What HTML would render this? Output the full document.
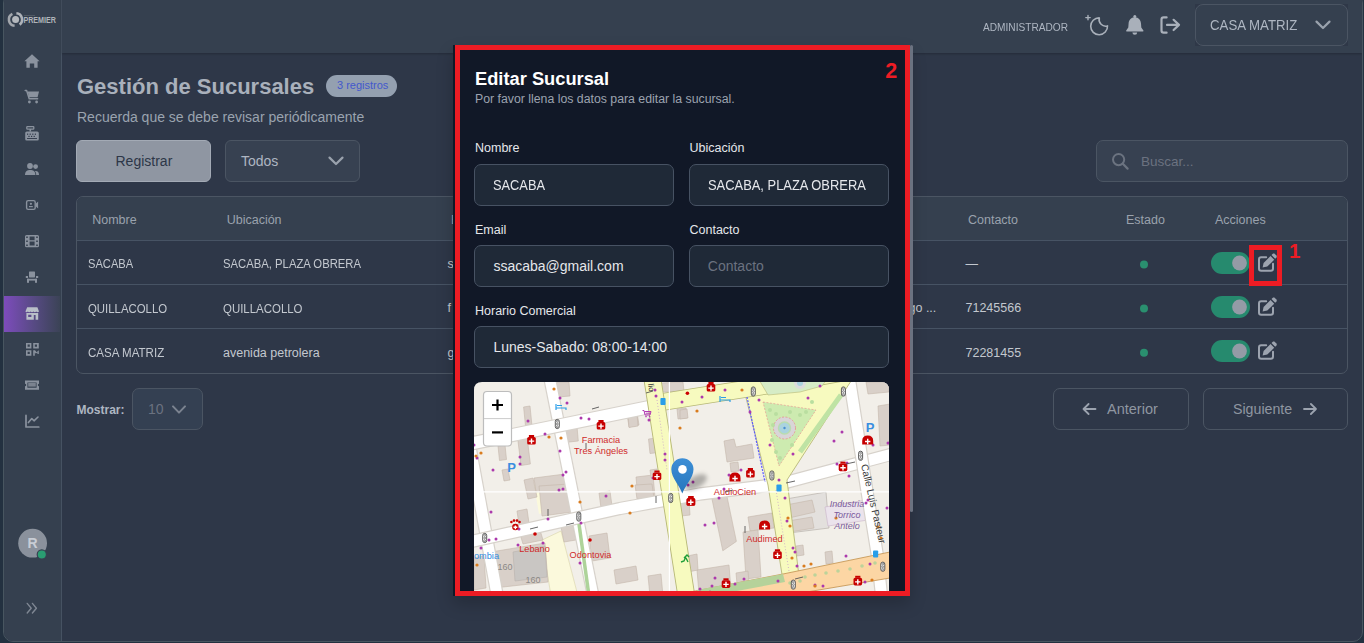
<!DOCTYPE html>
<html><head><meta charset="utf-8">
<style>
*{box-sizing:border-box;margin:0;padding:0}
html,body{width:1364px;height:643px;overflow:hidden;background:#233140;font-family:"Liberation Sans",sans-serif}
.a{position:absolute}
.t{position:absolute;line-height:1;white-space:nowrap}
#app{position:absolute;left:3px;top:-7px;width:1360px;height:649px;border:1px solid #485660;border-radius:10px;background:#2e3748;overflow:hidden}
#side{position:absolute;left:0;top:0;width:58px;height:100%;background:#35404f;border-right:1px solid #465262}
#hdr{position:absolute;left:58px;top:0;right:0;height:59px;background:#35404f;box-shadow:0 1px 2px rgba(0,0,0,.22)}
.ico{position:absolute;left:19px;width:20px;height:20px}
</style></head><body>
<div id="app">
  <div id="side"></div>
  <div id="hdr"></div>
</div>


<!-- sidebar svg -->
<svg class="a" style="left:0;top:0" width="62" height="643" viewBox="0 0 62 643">
  <defs><linearGradient id="act" x1="0" x2="1"><stop offset="0" stop-color="#7d4cbc"/><stop offset="0.55" stop-color="#564a82"/><stop offset="1" stop-color="#3b4356"/></linearGradient></defs>
  <rect x="4" y="296" width="56" height="36" fill="url(#act)"/>
  <!-- logo -->
  <path d="M16.4 13.3 A6.3 6.3 0 0 1 19.6 24.6" fill="none" stroke="#aeb2b8" stroke-width="2.6"/>
  <path d="M14.6 25.8 A6.3 6.3 0 0 1 12.4 13.9" fill="none" stroke="#a2a6ac" stroke-width="2.6"/>
  <circle cx="15.6" cy="19.6" r="3.5" fill="#b4b8bd"/>
  <text x="23.4" y="23.1" font-family="Liberation Sans" font-weight="bold" font-size="8.6" fill="#afb3b9" textLength="32.6" lengthAdjust="spacingAndGlyphs">PREMIER</text>
  <rect x="24" y="15" width="11" height="0.6" fill="#656b74"/>
  <g fill="#8a929e" stroke="none">
    <!-- home -->
    <path d="M32 54.2 L39.6 61.2 H37.6 V67.8 H34.2 V63.4 H29.8 V67.8 H26.4 V61.2 H24.4 Z"/>
    <!-- cart -->
    <path d="M27.6 91.6 H39 L37.6 97.2 H29.2 Z"/>
    <circle cx="29.4" cy="102" r="1.4"/><circle cx="36.6" cy="102" r="1.4"/>
    <!-- register -->
    <path d="M25.2 133 a1.6 1.6 0 0 1 1.6 -1.6 H37.2 a1.6 1.6 0 0 1 1.6 1.6 V139 a1.5 1.5 0 0 1 -1.5 1.5 H26.7 a1.5 1.5 0 0 1 -1.5 -1.5 Z"/>
    <rect x="29.5" y="129" width="1.6" height="2.6"/>
    <!-- people -->
    <circle cx="30" cy="166" r="2.9"/><circle cx="35.6" cy="166.6" r="2.4"/>
    <path d="M25 175 C25 171.2 27.4 170 30.2 170 C33 170 35.4 171.2 35.4 175 Z"/>
    <path d="M36.2 175 C36.2 173 35.6 171.6 34.6 171 C37.6 170.6 39 172 39 175 Z"/>
    <!-- film -->
    <path fill-rule="evenodd" d="M26.5 235.1 H37.5 a1.5 1.5 0 0 1 1.5 1.5 V245.8 a1.5 1.5 0 0 1 -1.5 1.5 H26.5 a1.5 1.5 0 0 1 -1.5 -1.5 V236.6 a1.5 1.5 0 0 1 1.5 -1.5 Z M26.2 236.4 v1.6 h1.6 v-1.6 Z M26.2 240.4 v1.6 h1.6 v-1.6 Z M26.2 244.4 v1.6 h1.6 v-1.6 Z M36.2 236.4 v1.6 h1.6 v-1.6 Z M36.2 240.4 v1.6 h1.6 v-1.6 Z M36.2 244.4 v1.6 h1.6 v-1.6 Z M29.6 236.6 h5 v3.6 h-5 Z M29.6 241.6 h5 v4 h-5 Z"/>
    <!-- chair -->
    <rect x="29" y="271.6" width="6" height="5.8" rx="0.6"/>
    <rect x="25.8" y="276" width="2.2" height="2"/><rect x="36" y="276" width="2.2" height="2"/>
    <rect x="27" y="278.8" width="10" height="1.8"/>
    <rect x="27" y="278.8" width="2" height="4"/><rect x="35" y="278.8" width="2" height="4"/>
    <!-- qr -->
    <path fill-rule="evenodd" d="M26 343 h5.4 v5.4 h-5.4 Z M27.6 344.6 v2.2 h2.2 v-2.2 Z M33.2 343 h5.6 v5.4 h-5.6 Z M34.8 344.6 v2.2 h2.2 v-2.2 Z M26 350.2 h5.4 v5.6 h-5.4 Z M27.6 351.8 v2.2 h2.2 v-2.2 Z"/>
    <path d="M33.2 350.2 h1.8 l1.6 2 l2.2 -2 v3.8 h-1.4 v-1.4 l-1.6 1 l-1 -1 v3.2 h-1.6 Z"/>
    <!-- ticket -->
    <path fill-rule="evenodd" d="M25 380.4 H39 V383.8 a1.2 1.2 0 0 0 0 2.4 V389.8 H25 V386.2 a1.2 1.2 0 0 0 0 -2.4 Z M27.4 382.4 V387.8 H36.6 V382.4 Z"/>
    <rect x="28.2" y="383" width="7.6" height="3.6" fill="#7b838f"/>
  </g>
  <g fill="none" stroke="#8a929e" stroke-width="1.5" stroke-linecap="round" stroke-linejoin="round">
    <path d="M25.2 90.4 H26.6 L29.2 98.8 H37.6"/>
    <rect x="26.8" y="126.6" width="7" height="2.6" rx="0.6" stroke-width="1.3"/>
    <rect x="26.6" y="200.6" width="8.6" height="8.8" rx="1.6" stroke-width="1.4"/>
    <path d="M26 415.4 V427 H38.8" stroke-width="1.7"/>
    <path d="M28.4 422.6 L31.8 418.6 L34 420.8 L38 417" stroke-width="1.6"/>
    <path d="M27.2 603.4 L31.2 608.2 L27.2 613 M32.4 603.4 L36.4 608.2 L32.4 613" stroke="#7f8793" stroke-width="1.4"/>
  </g>
  <g fill="#2e3748">
    <rect x="27" y="133.6" width="1.2" height="1.2"/><rect x="29.6" y="133.6" width="1.2" height="1.2"/><rect x="32.2" y="133.6" width="1.2" height="1.2"/><rect x="34.8" y="133.6" width="1.2" height="1.2"/>
    <rect x="28.4" y="135.8" width="1.2" height="1.2"/><rect x="31" y="135.8" width="1.2" height="1.2"/><rect x="33.6" y="135.8" width="1.2" height="1.2"/>
    <rect x="27" y="138" width="10" height="0.9"/>
  </g>
  <g fill="#8a929e">
    <circle cx="30.9" cy="203.8" r="1.1"/><rect x="29" y="206" width="3.8" height="1.2"/>
    <path d="M35.6 203.8 L38.1 201.6 V208.4 L35.6 206.2 Z"/>
  </g>
  <!-- store -->
  <g fill="#b9bfc8">
    <path d="M27.2 307.2 H37.4 L39 311.6 Q37.6 312.8 36.2 311.6 Q34.8 312.8 33.4 311.6 Q32 312.8 30.6 311.6 Q29.2 312.8 27.8 311.6 Q26.6 312.8 25.4 311.6 Z"/>
    <path fill-rule="evenodd" d="M26.4 313 H38.2 V319.8 H26.4 Z M28.2 314.8 v2.2 h3.2 v-2.2 Z M33.8 315 v4.8 h1.8 v-4.8 Z"/>
  </g>
  <!-- avatar -->
  <circle cx="32.6" cy="543.2" r="14.4" fill="#8a919c"/>
  <text x="32.6" y="548.4" text-anchor="middle" font-family="Liberation Sans" font-weight="bold" font-size="14" fill="#c8cdd5">R</text>
  <circle cx="41.8" cy="554.4" r="4.6" fill="#2a9d72" stroke="#374151" stroke-width="1.2"/>
</svg>

<!-- header -->
<div class="t" style="left:983px;top:21.5px;font-size:11px;color:#aeb6c2;transform:scaleX(0.921);transform-origin:0 0">ADMINISTRADOR</div>
<div class="a" style="left:1195px;top:4px;width:153px;height:42px;background:#2f3848"></div><div class="a" style="left:1195px;top:4px;width:153px;height:42px;border:1px solid #4b5563;border-radius:8px;background:#35404f"></div>
<div class="t" style="left:1210px;top:18px;font-size:14px;color:#aeb6c2;transform:scaleX(0.946);transform-origin:0 0">CASA MATRIZ</div>

<!-- title -->
<div class="t" style="left:77px;top:76.4px;font-size:22px;font-weight:bold;color:#a9b0bb">Gestión de Sucursales</div>
<div class="a" style="left:326px;top:75px;width:71px;height:22px;border-radius:11px;background:#94a0b0"></div>
<div class="t" style="left:337px;top:80.4px;font-size:11px;color:#4358cc">3 registros</div>
<div class="t" style="left:77px;top:109.5px;font-size:14px;color:#9aa3af">Recuerda que se debe revisar periódicamente</div>

<!-- buttons -->
<div class="a" style="left:76px;top:140px;width:135px;height:42px;border:1px solid #a3aab5;border-radius:6px;background:#8f96a2"></div>
<div class="t" style="left:115.5px;top:154px;font-size:14px;color:#2d3748">Registrar</div>
<div class="a" style="left:225px;top:140px;width:135px;height:42px;border:1px solid #4b5563;border-radius:6px;background:#374151"></div>
<div class="t" style="left:241px;top:154px;font-size:14px;color:#aeb6c2">Todos</div>

<div class="a" style="left:1096px;top:140px;width:252px;height:42px;border:1px solid #4b5563;border-radius:7px;background:#374151"></div>
<div class="t" style="left:1141px;top:154.5px;font-size:13.5px;color:#6b7280">Buscar...</div>

<!-- table -->
<div class="a" style="left:76px;top:196px;width:1272px;height:178px;border:1px solid #4b5563;border-radius:7px;background:#2e3748;overflow:hidden">
  <div class="a" style="left:0;top:0;width:100%;height:44px;background:#35404f;border-bottom:1px solid #475364"></div>
  <div class="a" style="left:0;top:87px;width:100%;height:1px;background:#475364"></div>
  <div class="a" style="left:0;top:131px;width:100%;height:1px;background:#475364"></div>
</div>

<!-- pagination -->
<div class="t" style="left:76.5px;top:403.8px;font-size:12px;font-weight:bold;color:#aeb6c2">Mostrar:</div>
<div class="a" style="left:132px;top:388px;width:71px;height:42px;border:1px solid #4b5563;border-radius:7px;background:#344052"></div>
<div class="t" style="left:148px;top:402px;font-size:14px;color:#6b7280">10</div>
<div class="a" style="left:1053px;top:388px;width:136px;height:42px;border:1px solid #4b5563;border-radius:7px"></div>
<div class="t" style="left:1107px;top:402px;font-size:14.5px;color:#8f96a1">Anterior</div>
<div class="a" style="left:1203px;top:388px;width:145px;height:42px;border:1px solid #4b5563;border-radius:7px"></div>
<div class="t" style="left:1233px;top:402px;font-size:14.2px;color:#8f96a1">Siguiente</div>


<!-- header/main icons svg -->
<svg class="a" style="left:0;top:0" width="1364" height="643" viewBox="0 0 1364 643">
  <g fill="none" stroke="#a9b0ba" stroke-linecap="round" stroke-linejoin="round">
    <path d="M1099.3 17.9 A8.4 8.4 0 1 0 1107.5 25.9 A6.6 6.6 0 0 1 1099.3 17.9 Z" stroke-width="1.6"/>
    <path d="M1088 15.4 V19.8 M1085.8 17.6 H1090.2" stroke-width="1.4"/>
    <path d="M1166.6 17.4 H1163.6 a2.1 2.1 0 0 0 -2.1 2.1 V30.6 a2.1 2.1 0 0 0 2.1 2.1 H1166.6" stroke-width="2.2"/>
    <path d="M1167 24.9 H1179 M1173.6 19.8 L1179 24.9 L1173.6 30" stroke-width="2.2"/>
    <path d="M1316.5 21.6 L1323 28 L1329.5 21.6" stroke-width="2.2" stroke="#9aa2ad"/>
    <path d="M329.5 157.6 L336 164 L342.5 157.6" stroke-width="2.2" stroke="#9aa2ad"/>
    <path d="M173 406.4 L179 412.6 L185 406.4" stroke-width="2" stroke="#7b8390"/>
    <circle cx="1118.6" cy="159.6" r="5.6" stroke="#6b7380" stroke-width="2"/>
    <path d="M1122.8 163.8 L1127.6 168.6" stroke="#6b7380" stroke-width="2.2"/>
    <path d="M1095.5 409 H1083.5 M1088.6 404 L1083.5 409 L1088.6 414" stroke="#9ca3af" stroke-width="1.8"/>
    <path d="M1304 409 H1316 M1310.9 404 L1316 409 L1310.9 414" stroke="#9ca3af" stroke-width="1.8"/>
  </g>
  <g fill="#a9b0ba">
    <circle cx="1134.8" cy="16.4" r="1.5"/>
    <path d="M1134.8 17.2 C1130.8 17.2 1128.7 20.2 1128.6 23.6 L1128.3 27.6 L1126.2 30.4 Q1125.7 31.4 1126.9 31.4 H1142.7 Q1143.9 31.4 1143.4 30.4 L1141.3 27.6 L1141 23.6 C1140.9 20.2 1138.8 17.2 1134.8 17.2 Z"/>
    <path d="M1132.4 32.4 H1137.2 a2.4 2.4 0 0 1 -4.8 0 Z"/>
  </g>
  <!-- status dots -->
  <g fill="#2a8f6f">
    <circle cx="1144" cy="264.5" r="4"/><circle cx="1144" cy="308.6" r="4"/><circle cx="1144" cy="352.8" r="4"/>
  </g>
  <!-- toggles -->
  <g>
    <rect x="1211" y="252" width="39" height="22" rx="11" fill="#268a6e"/>
    <circle cx="1239.5" cy="263" r="7.4" fill="#949ba6"/>
    <rect x="1211" y="296" width="39" height="22" rx="11" fill="#268a6e"/>
    <circle cx="1239.5" cy="307" r="7.4" fill="#949ba6"/>
    <rect x="1211" y="340" width="39" height="22" rx="11" fill="#268a6e"/>
    <circle cx="1239.5" cy="351" r="7.4" fill="#949ba6"/>
  </g>
  <!-- edit icons -->
  <g id="ed0">
    <path d="M1266.2 257.2 H1261.2 a2.2 2.2 0 0 0 -2.2 2.2 V268.6 a2.2 2.2 0 0 0 2.2 2.2 H1270.8 a2.2 2.2 0 0 0 2.2 -2.2 V263.8" fill="none" stroke="#9ca3af" stroke-width="2" stroke-linecap="round"/>
    <path d="M1262.60 267.60 L1263.59 262.93 L1270.52 256.00 L1274.20 259.68 L1267.27 266.61 Z M1271.51 255.01 L1273.07 253.46 L1274.34 253.46 L1276.74 255.86 L1276.74 257.13 L1275.19 258.69 Z" fill="#9ca3af"/>
  </g>
  <g transform="translate(0 44)">
    <path d="M1266.2 257.2 H1261.2 a2.2 2.2 0 0 0 -2.2 2.2 V268.6 a2.2 2.2 0 0 0 2.2 2.2 H1270.8 a2.2 2.2 0 0 0 2.2 -2.2 V263.8" fill="none" stroke="#9ca3af" stroke-width="2" stroke-linecap="round"/>
    <path d="M1262.60 267.60 L1263.59 262.93 L1270.52 256.00 L1274.20 259.68 L1267.27 266.61 Z M1271.51 255.01 L1273.07 253.46 L1274.34 253.46 L1276.74 255.86 L1276.74 257.13 L1275.19 258.69 Z" fill="#9ca3af"/>
  </g>
  <g transform="translate(0 88)">
    <path d="M1266.2 257.2 H1261.2 a2.2 2.2 0 0 0 -2.2 2.2 V268.6 a2.2 2.2 0 0 0 2.2 2.2 H1270.8 a2.2 2.2 0 0 0 2.2 -2.2 V263.8" fill="none" stroke="#9ca3af" stroke-width="2" stroke-linecap="round"/>
    <path d="M1262.60 267.60 L1263.59 262.93 L1270.52 256.00 L1274.20 259.68 L1267.27 266.61 Z M1271.51 255.01 L1273.07 253.46 L1274.34 253.46 L1276.74 255.86 L1276.74 257.13 L1275.19 258.69 Z" fill="#9ca3af"/>
  </g>
</svg>

<!-- table text -->
<div class="t" style="left:92.2px;top:214.0px;font-size:12.5px;color:#9aa2ad;">Nombre</div>
<div class="t" style="left:226.7px;top:214.0px;font-size:12.5px;color:#9aa2ad;">Ubicación</div>
<div class="t" style="left:451px;top:214.0px;font-size:12.5px;color:#9aa2ad;">Email</div>
<div class="t" style="left:968px;top:214.0px;font-size:12.5px;color:#9aa2ad;">Contacto</div>
<div class="t" style="left:1126px;top:214.0px;font-size:12.5px;color:#9aa2ad;">Estado</div>
<div class="t" style="left:1215px;top:214.0px;font-size:12.5px;color:#9aa2ad;">Acciones</div>
<div class="t" style="left:88.3px;top:257.4px;font-size:13.2px;color:#c3c8cf;transform:scaleX(0.844);transform-origin:0 0">SACABA</div>
<div class="t" style="left:223px;top:257.4px;font-size:13.2px;color:#c3c8cf;transform:scaleX(0.856);transform-origin:0 0">SACABA, PLAZA OBRERA</div>
<div class="t" style="left:447.5px;top:258.0px;font-size:12.5px;color:#c3c8cf;">s</div>
<div class="t" style="left:965.5px;top:258.0px;font-size:12.5px;color:#c3c8cf;">—</div>
<div class="t" style="left:88.3px;top:301.8px;font-size:13.2px;color:#c3c8cf;transform:scaleX(0.864);transform-origin:0 0">QUILLACOLLO</div>
<div class="t" style="left:223px;top:301.8px;font-size:13.2px;color:#c3c8cf;transform:scaleX(0.868);transform-origin:0 0">QUILLACOLLO</div>
<div class="t" style="left:447.5px;top:302.4px;font-size:12.5px;color:#c3c8cf;">f</div>
<div class="t" style="left:965.5px;top:302.4px;font-size:12.5px;color:#c3c8cf;">71245566</div>
<div class="t" style="left:88.3px;top:346.2px;font-size:13.2px;color:#c3c8cf;transform:scaleX(0.877);transform-origin:0 0">CASA MATRIZ</div>
<div class="t" style="left:223px;top:346.8px;font-size:12.5px;color:#c3c8cf;">avenida petrolera</div>
<div class="t" style="left:447.5px;top:346.8px;font-size:12.5px;color:#c3c8cf;text-decoration:underline">g</div>
<div class="t" style="left:965.5px;top:346.8px;font-size:12.5px;color:#c3c8cf;">72281455</div>
<div class="t" style="left:908.5px;top:302.4px;font-size:12.5px;color:#c3c8cf;">go ...</div>

<!-- modal -->
<div class="a" style="left:453px;top:45px;width:457px;height:551px;background:#111827;box-shadow:0 8px 16px rgba(0,0,0,.2)"></div>
<div class="t" style="left:475px;top:70.3px;font-size:18.3px;color:#ffffff;font-weight:bold">Editar Sucursal</div>
<div class="t" style="left:475px;top:93.3px;font-size:12.3px;color:#9ca3af;">Por favor llena los datos para editar la sucursal.</div>
<div class="t" style="left:475px;top:142.4px;font-size:12.5px;color:#e5e7eb;">Nombre</div>
<div class="t" style="left:689.5px;top:142.4px;font-size:12.5px;color:#e5e7eb;">Ubicación</div>
<div class="t" style="left:475px;top:223.5px;font-size:12.5px;color:#e5e7eb;">Email</div>
<div class="t" style="left:689.5px;top:223.5px;font-size:12.5px;color:#e5e7eb;">Contacto</div>
<div class="t" style="left:475px;top:304.5px;font-size:12.5px;color:#e5e7eb;">Horario Comercial</div>
<div class="a" style="left:474px;top:164px;width:200px;height:42px;background:#1f2937;border:1px solid #475263;border-radius:7px"></div>
<div class="a" style="left:689px;top:164px;width:200px;height:42px;background:#1f2937;border:1px solid #475263;border-radius:7px"></div>
<div class="a" style="left:474px;top:245px;width:200px;height:42px;background:#1f2937;border:1px solid #475263;border-radius:7px"></div>
<div class="a" style="left:689px;top:245px;width:200px;height:42px;background:#1f2937;border:1px solid #475263;border-radius:7px"></div>
<div class="a" style="left:474px;top:326px;width:415px;height:42px;background:#1f2937;border:1px solid #475263;border-radius:7px"></div>
<div class="t" style="left:493.4px;top:177.9px;font-size:14px;color:#e5e7eb;transform:scaleX(0.916);transform-origin:0 0">SACABA</div>
<div class="t" style="left:707.8px;top:177.9px;font-size:14px;color:#e5e7eb;transform:scaleX(0.922);transform-origin:0 0">SACABA, PLAZA OBRERA</div>
<div class="t" style="left:493.4px;top:258.6px;font-size:14px;color:#e5e7eb;">ssacaba@gmail.com</div>
<div class="t" style="left:707.8px;top:258.6px;font-size:14px;color:#6b7280;">Contacto</div>
<div class="t" style="left:493.4px;top:339.5px;font-size:14px;color:#e5e7eb;">Lunes-Sabado: 08:00-14:00</div>
<!-- map -->
<svg class="a" style="left:474px;top:382px" width="415" height="214" viewBox="474 382 415 214">
<defs><clipPath id="mc"><path d="M482 382 H881 Q889 382 889 390 V596 H474 V390 Q474 382 482 382 Z"/></clipPath><radialGradient id="shd" cx="0.5" cy="0.5" r="0.5"><stop offset="0" stop-color="#000" stop-opacity="0.35"/><stop offset="1" stop-color="#000" stop-opacity="0"/></radialGradient><filter id="blr" x="-50%" y="-50%" width="200%" height="200%"><feGaussianBlur stdDeviation="2.2"/></filter><linearGradient id="pin" x1="0" y1="0" x2="0" y2="1"><stop offset="0" stop-color="#3d8fd6"/><stop offset="1" stop-color="#2676bd"/></linearGradient></defs>
<g clip-path="url(#mc)">
<rect x="474" y="382" width="415" height="214" fill="#f2efe9"/>
<polygon points="542,540 561,531 578,596 551,596" fill="#fbf9dc" stroke="#d8d4a8" stroke-width="0.6" />
<polygon points="534,485 541,484 546,512 539,514" fill="#fbf9dc" stroke="none" stroke-width="0" />
<polygon points="786,499 826,492 829,528 789,533" fill="#e3e0dd" stroke="#b0a9a3" stroke-width="0.6" />
<polygon points="627,414 637,412 639,425 629,427" fill="#d9d0c9" stroke="#c4b7ab" stroke-width="0.6" />
<polygon points="677,409 686,408 687,418 678,419" fill="#d9d0c9" stroke="#c4b7ab" stroke-width="0.6" />
<polygon points="661,383 683,382 684,391 662,392" fill="#d9d0c9" stroke="#c4b7ab" stroke-width="0.6" />
<polygon points="724,441 734,439 736,447 752,444 754,458 727,462" fill="#d9d0c9" stroke="#c4b7ab" stroke-width="0.6" />
<polygon points="730,463 738,462 739,471 731,472" fill="#d9d0c9" stroke="#c4b7ab" stroke-width="0.6" />
<polygon points="636,477 653,475 655,497 638,499" fill="#d9d0c9" stroke="#c4b7ab" stroke-width="0.6" />
<polygon points="650,470 657,469 658,477 651,478" fill="#d9d0c9" stroke="#c4b7ab" stroke-width="0.6" />
<polygon points="680,500 689,499 690,515 681,516" fill="#d9d0c9" stroke="#c4b7ab" stroke-width="0.6" />
<polygon points="711,494.4 726,491.8 736.4,541.4 722.8,550.8" fill="#d9d0c9" stroke="#c4b7ab" stroke-width="0.6" />
<polygon points="523.6,407 530,406 532,426 525.6,427" fill="#d9d0c9" stroke="#c4b7ab" stroke-width="0.6" />
<polygon points="517.6,438 527,436.5 530.4,464 521,465.5" fill="#d9d0c9" stroke="#c4b7ab" stroke-width="0.6" />
<polygon points="498,446 505,445 506.5,459.5 499.5,460.5" fill="#d9d0c9" stroke="#c4b7ab" stroke-width="0.6" />
<polygon points="564.7,428 577,426.5 578.3,441 566,442.4" fill="#d9d0c9" stroke="#c4b7ab" stroke-width="0.6" />
<polygon points="628,415 637,413.5 638,426 629,427.5" fill="#d9d0c9" stroke="#c4b7ab" stroke-width="0.6" />
<polygon points="556,382 569,382 570,396 558,397" fill="#d9d0c9" stroke="#c4b7ab" stroke-width="0.6" />
<polygon points="648.5,439 657,438 658.7,452.5 650,453.5" fill="#d9d0c9" stroke="#c4b7ab" stroke-width="0.6" />
<polygon points="534,478 565,474 566,490 536,492" fill="#d9d0c9" stroke="#c4b7ab" stroke-width="0.6" />
<polygon points="539,486 569,484 572,512 542,516" fill="#d9d0c9" stroke="#c4b7ab" stroke-width="0.6" />
<polygon points="517,511 527,509 529,523 519,525" fill="#d9d0c9" stroke="#c4b7ab" stroke-width="0.6" />
<polygon points="520,534 540,530 543,540 523,544" fill="#d9d0c9" stroke="#c4b7ab" stroke-width="0.6" />
<polygon points="561,527 573,525 576,540 564,542" fill="#d9d0c9" stroke="#c4b7ab" stroke-width="0.6" />
<polygon points="491,552 545,543 548,582 494,588" fill="#d9d0c9" stroke="#c4b7ab" stroke-width="0.6" />
<polygon points="589,536 607,533 610,558 592,561" fill="#d9d0c9" stroke="#c4b7ab" stroke-width="0.6" />
<polygon points="599,493 610,491 612,506 601,508" fill="#d9d0c9" stroke="#c4b7ab" stroke-width="0.6" />
<polygon points="635,485 652,484 654,498 637,499" fill="#d9d0c9" stroke="#c4b7ab" stroke-width="0.6" />
<polygon points="614,570 636,566 638,580 616,584" fill="#d9d0c9" stroke="#c4b7ab" stroke-width="0.6" />
<polygon points="648,576 661,574 663,596 650,596" fill="#d9d0c9" stroke="#c4b7ab" stroke-width="0.6" />
<polygon points="474,558 484,556 486,588 474,590" fill="#d9d0c9" stroke="#c4b7ab" stroke-width="0.6" />
<polygon points="748,517 772,513 774,528 750,531" fill="#d9d0c9" stroke="#c4b7ab" stroke-width="0.6" />
<polygon points="743,532 758,530 761,577 746,579" fill="#d9d0c9" stroke="#c4b7ab" stroke-width="0.6" />
<polygon points="786,505 812,500 815,512 789,518" fill="#d9d0c9" stroke="#c4b7ab" stroke-width="0.6" />
<polygon points="788,521 812,517 814,528 790,532" fill="#d9d0c9" stroke="#c4b7ab" stroke-width="0.6" />
<polygon points="796,546 803,545 804,555 797,556" fill="#d9d0c9" stroke="#c4b7ab" stroke-width="0.6" />
<polygon points="825,552 832,551 833,563 826,564" fill="#d9d0c9" stroke="#c4b7ab" stroke-width="0.6" />
<polygon points="697,570 729,565 731,590 699,594" fill="#d9d0c9" stroke="#c4b7ab" stroke-width="0.6" />
<polygon points="736,573 748,571 749,582 737,584" fill="#d9d0c9" stroke="#c4b7ab" stroke-width="0.6" />
<polygon points="687,556 697,554 698,570 688,572" fill="#d9d0c9" stroke="#c4b7ab" stroke-width="0.6" />
<polygon points="878,406 890,404 890,445 880,446" fill="#d9d0c9" stroke="#c4b7ab" stroke-width="0.6" />
<polygon points="680,410 687,409 688,418 680,419" fill="#d9d0c9" stroke="#c4b7ab" stroke-width="0.6" />
<polygon points="474,470 480,469 482,486 474,487" fill="#d9d0c9" stroke="#c4b7ab" stroke-width="0.6" />
<polygon points="498,414 506,412 511,432 503,434" fill="#d9d0c9" stroke="#c4b7ab" stroke-width="0.6" />
<polygon points="524,480 533,478 537,497 528,499" fill="#d9d0c9" stroke="#c4b7ab" stroke-width="0.6" />
<polygon points="502,470 508,469 510,480 504,481" fill="#d9d0c9" stroke="#c4b7ab" stroke-width="0.6" />
<polygon points="780,383 800,382 802,392 782,393" fill="#d9d0c9" stroke="#c4b7ab" stroke-width="0.6" />
<polygon points="866,382 889,382 889,392 868,394" fill="#d9d0c9" stroke="#c4b7ab" stroke-width="0.6" />
<polygon points="513,552 545,546 547,577 515,581" fill="#c9c6c3" stroke="#b8b2ac" stroke-width="0.6" />
<polygon points="825,507 866,500 868,520 828,526" fill="#ebe3ec" stroke="#c9b3c9" stroke-width="0.6" />
<polygon points="742,382 790,382 760,392" fill="#cdebb0" stroke="none" stroke-width="0" />
<polyline points="548,370 594,600" fill="none" stroke="#d7d2cb" stroke-width="12.9" stroke-linejoin="round" />
<polyline points="548,370 594,600" fill="none" stroke="#ffffff" stroke-width="10.5" stroke-linejoin="round" />
<polyline points="468,436 498,600" fill="none" stroke="#d7d2cb" stroke-width="13.4" stroke-linejoin="round" />
<polyline points="468,436 498,600" fill="none" stroke="#ffffff" stroke-width="11" stroke-linejoin="round" />
<polyline points="460,445.8 652,406.5" fill="none" stroke="#d7d2cb" stroke-width="14.4" stroke-linejoin="round" />
<polyline points="460,445.8 652,406.5" fill="none" stroke="#ffffff" stroke-width="12" stroke-linejoin="round" />
<polyline points="460,544 620,508.5 700,494 780,484 900,452" fill="none" stroke="#d7d2cb" stroke-width="13.4" stroke-linejoin="round" />
<polyline points="460,544 620,508.5 700,494 780,484 900,452" fill="none" stroke="#ffffff" stroke-width="11" stroke-linejoin="round" />
<polyline points="848,370 866,485 877,553 882,600" fill="none" stroke="#d7d2cb" stroke-width="13.4" stroke-linejoin="round" />
<polyline points="848,370 866,485 877,553 882,600" fill="none" stroke="#ffffff" stroke-width="11" stroke-linejoin="round" />
<polygon points="742,378 853,378 787,480 802,600 786,600 768,485" fill="#f7fabf" stroke="none" stroke-width="0" />
<polyline points="742,382 768,485 786,600" fill="none" stroke="#b7b877" stroke-width="0.9" stroke-linejoin="round" />
<polyline points="853,378 787,480 802,600" fill="none" stroke="#b7b877" stroke-width="0.9" stroke-linejoin="round" />
<polygon points="763,402 816,410 779,466" fill="#cdebb0" stroke="#e88f8f" stroke-width="0.6" stroke-dasharray="2 1.5"/>
<circle cx="784.5" cy="428" r="11" fill="#d9d5d8" stroke="#e88f8f" stroke-width="0.8" stroke-dasharray="2 1.5"/>
<circle cx="784.5" cy="428" r="6" fill="#aad3df" stroke="#b9dcb0" stroke-width="1.5"/>
<circle cx="784.5" cy="428" r="1.2" fill="#4a8fd0"/>
<polyline points="800,452 841,395" fill="none" stroke="#bfe3a4" stroke-width="5" stroke-linejoin="round" />
<circle cx="770" cy="410" r="2" fill="#b9dea0"/>
<circle cx="776" cy="414" r="2" fill="#b9dea0"/>
<circle cx="790" cy="412" r="2" fill="#b9dea0"/>
<circle cx="800" cy="415" r="2" fill="#b9dea0"/>
<circle cx="806" cy="412" r="2" fill="#b9dea0"/>
<circle cx="773" cy="425" r="2" fill="#b9dea0"/>
<circle cx="772" cy="440" r="2" fill="#b9dea0"/>
<circle cx="776" cy="452" r="2" fill="#b9dea0"/>
<circle cx="792" cy="445" r="2" fill="#b9dea0"/>
<circle cx="780" cy="458" r="2" fill="#b9dea0"/>
<circle cx="812" cy="402" r="2" fill="#b9dea0"/>
<polyline points="656,403 700,396 790,382 880,366" fill="none" stroke="#b7b877" stroke-width="17.8" stroke-linejoin="round" />
<polyline points="656,403 700,396 790,382 880,366" fill="none" stroke="#f7fabf" stroke-width="16" stroke-linejoin="round" />
<polyline points="651,370 687,600" fill="none" stroke="#b7b877" stroke-width="17.8" stroke-linejoin="round" />
<polyline points="651,370 687,600" fill="none" stroke="#f7fabf" stroke-width="16" stroke-linejoin="round" />
<polygon points="758,378 828,378 822,386 800,392 768,395" fill="#d6ecc6" stroke="#b7b877" stroke-width="0.6" />
<circle cx="800" cy="383" r="6" fill="#dcdcdc"/>
<circle cx="800" cy="383" r="3" fill="#aad3df"/>
<polyline points="747,397 765,482" fill="none" stroke="#5a5aff" stroke-width="1.2" stroke-linejoin="round" stroke-dasharray="2 1.2"/>
<polyline points="657,400 667,470" fill="none" stroke="#c9a4c9" stroke-width="0.8" stroke-linejoin="round" stroke-dasharray="1 2"/>
<polyline points="776,490 792,590" fill="none" stroke="#c9a4c9" stroke-width="0.8" stroke-linejoin="round" stroke-dasharray="1 2"/>
<polygon points="690,592 783,574 890,552 890,578 783,596 690,606" fill="#fcd6a4" stroke="#c79a5a" stroke-width="0.9" />
<polygon points="697,590 783,574 785,582 699,598" fill="#b5d29a" stroke="none" stroke-width="0" />
<circle cx="805" cy="577" r="1.8" fill="#bcd39a"/>
<circle cx="815" cy="575" r="1.8" fill="#bcd39a"/>
<circle cx="826" cy="573" r="1.8" fill="#bcd39a"/>
<circle cx="838" cy="571" r="1.8" fill="#bcd39a"/>
<circle cx="850" cy="569" r="1.8" fill="#bcd39a"/>
<circle cx="862" cy="566" r="1.8" fill="#bcd39a"/>
<circle cx="875" cy="563" r="1.8" fill="#bcd39a"/>
<circle cx="790" cy="583" r="1.8" fill="#bcd39a"/>
<circle cx="800" cy="581" r="1.8" fill="#bcd39a"/>
<polyline points="579,524 589,596" fill="none" stroke="#aed39a" stroke-width="3.5" stroke-linejoin="round" />
<line x1="474" y1="491.8" x2="889" y2="491.8" stroke="#ffffff" stroke-width="1.2"/>
<line x1="669.4" y1="382" x2="669.4" y2="596" stroke="#ffffff" stroke-width="1.2"/>
<circle cx="560" cy="398" r="1.5" fill="#ac39ac"/>
<circle cx="567" cy="403" r="1.5" fill="#ac39ac"/>
<circle cx="581" cy="418" r="1.5" fill="#ac39ac"/>
<circle cx="589" cy="419" r="1.5" fill="#ac39ac"/>
<circle cx="528" cy="421" r="1.5" fill="#ac39ac"/>
<circle cx="520" cy="457" r="1.5" fill="#ac39ac"/>
<circle cx="520" cy="464" r="1.5" fill="#ac39ac"/>
<circle cx="493" cy="470" r="1.5" fill="#ac39ac"/>
<circle cx="474" cy="445" r="1.5" fill="#ac39ac"/>
<circle cx="477" cy="458" r="1.5" fill="#ac39ac"/>
<circle cx="545" cy="434" r="1.5" fill="#ac39ac"/>
<circle cx="560" cy="451" r="1.5" fill="#ac39ac"/>
<circle cx="563" cy="475" r="1.5" fill="#ac39ac"/>
<circle cx="566" cy="472" r="1.5" fill="#ac39ac"/>
<circle cx="491" cy="512" r="1.5" fill="#ac39ac"/>
<circle cx="519" cy="529" r="1.5" fill="#ac39ac"/>
<circle cx="489" cy="540" r="1.5" fill="#ac39ac"/>
<circle cx="496" cy="539" r="1.5" fill="#ac39ac"/>
<circle cx="481" cy="548" r="1.5" fill="#ac39ac"/>
<circle cx="518" cy="545" r="1.5" fill="#ac39ac"/>
<circle cx="543" cy="543" r="1.5" fill="#ac39ac"/>
<circle cx="548" cy="519" r="1.5" fill="#ac39ac"/>
<circle cx="581" cy="523" r="1.5" fill="#ac39ac"/>
<circle cx="580" cy="563" r="1.5" fill="#ac39ac"/>
<circle cx="563" cy="489" r="1.5" fill="#ac39ac"/>
<circle cx="559" cy="490" r="1.5" fill="#ac39ac"/>
<circle cx="606" cy="496" r="1.5" fill="#ac39ac"/>
<circle cx="655" cy="390" r="1.5" fill="#ac39ac"/>
<circle cx="656" cy="396" r="1.5" fill="#ac39ac"/>
<circle cx="649" cy="420" r="1.5" fill="#ac39ac"/>
<circle cx="665" cy="454" r="1.5" fill="#ac39ac"/>
<circle cx="665" cy="460" r="1.5" fill="#ac39ac"/>
<circle cx="653" cy="478" r="1.5" fill="#ac39ac"/>
<circle cx="705" cy="525" r="1.5" fill="#ac39ac"/>
<circle cx="808" cy="398" r="1.5" fill="#ac39ac"/>
<circle cx="759" cy="400" r="1.5" fill="#ac39ac"/>
<circle cx="779" cy="480" r="1.5" fill="#ac39ac"/>
<circle cx="837" cy="464" r="1.5" fill="#ac39ac"/>
<circle cx="847" cy="463" r="1.5" fill="#ac39ac"/>
<circle cx="849" cy="476" r="1.5" fill="#ac39ac"/>
<circle cx="834" cy="441" r="1.5" fill="#ac39ac"/>
<circle cx="888" cy="443" r="1.5" fill="#ac39ac"/>
<circle cx="842" cy="432" r="1.5" fill="#ac39ac"/>
<circle cx="873" cy="445" r="1.5" fill="#ac39ac"/>
<circle cx="887" cy="508" r="1.5" fill="#ac39ac"/>
<circle cx="866" cy="503" r="1.5" fill="#ac39ac"/>
<circle cx="714" cy="523" r="1.5" fill="#ac39ac"/>
<circle cx="719" cy="498" r="1.5" fill="#ac39ac"/>
<circle cx="724" cy="489" r="1.5" fill="#ac39ac"/>
<circle cx="785" cy="498" r="1.5" fill="#ac39ac"/>
<circle cx="787" cy="521" r="1.5" fill="#ac39ac"/>
<circle cx="793" cy="548" r="1.5" fill="#ac39ac"/>
<circle cx="795" cy="552" r="1.5" fill="#ac39ac"/>
<circle cx="797" cy="566" r="1.5" fill="#ac39ac"/>
<circle cx="870" cy="564" r="1.5" fill="#ac39ac"/>
<circle cx="856" cy="580" r="1.5" fill="#ac39ac"/>
<circle cx="815" cy="585" r="1.5" fill="#ac39ac"/>
<circle cx="823" cy="586" r="1.5" fill="#ac39ac"/>
<circle cx="846" cy="556" r="1.5" fill="#ac39ac"/>
<circle cx="778" cy="581" r="1.5" fill="#ac39ac"/>
<circle cx="793" cy="454" r="1.5" fill="#ac39ac"/>
<circle cx="770" cy="445" r="1.5" fill="#ac39ac"/>
<circle cx="750" cy="412" r="1.5" fill="#ac39ac"/>
<circle cx="688" cy="485" r="1.5" fill="#ac39ac"/>
<circle cx="693" cy="482" r="1.5" fill="#ac39ac"/>
<circle cx="729" cy="475" r="1.5" fill="#ac39ac"/>
<circle cx="741" cy="470" r="1.5" fill="#ac39ac"/>
<circle cx="702" cy="397" r="1.5" fill="#ac39ac"/>
<circle cx="725" cy="390" r="1.5" fill="#ac39ac"/>
<circle cx="682" cy="402" r="1.5" fill="#ac39ac"/>
<circle cx="775" cy="378" r="1.5" fill="#ac39ac"/>
<circle cx="880" cy="380" r="1.5" fill="#ac39ac"/>
<circle cx="820" cy="386" r="1.5" fill="#ac39ac"/>
<circle cx="700" cy="589" r="1.5" fill="#ac39ac"/>
<circle cx="712" cy="586" r="1.5" fill="#ac39ac"/>
<circle cx="715" cy="578" r="1.5" fill="#ac39ac"/>
<circle cx="735" cy="584" r="1.5" fill="#ac39ac"/>
<circle cx="744" cy="579" r="1.5" fill="#ac39ac"/>
<circle cx="710" cy="592" r="1.5" fill="#ac39ac"/>
<circle cx="770" cy="595" r="1.5" fill="#ac39ac"/>
<circle cx="868" cy="500" r="1.5" fill="#ac39ac"/>
<circle cx="865" cy="582" r="1.5" fill="#ac39ac"/>
<circle cx="554" cy="389" r="1.6" fill="#d97c1e"/>
<circle cx="549" cy="437" r="1.6" fill="#d97c1e"/>
<circle cx="561" cy="438" r="1.6" fill="#d97c1e"/>
<circle cx="476" cy="456" r="1.6" fill="#d97c1e"/>
<circle cx="481" cy="453" r="1.6" fill="#d97c1e"/>
<circle cx="477" cy="565" r="1.6" fill="#d97c1e"/>
<circle cx="580" cy="502" r="1.6" fill="#d97c1e"/>
<circle cx="632" cy="486" r="1.6" fill="#d97c1e"/>
<circle cx="630" cy="513" r="1.6" fill="#d97c1e"/>
<circle cx="680" cy="428" r="1.6" fill="#d97c1e"/>
<circle cx="697" cy="411" r="1.6" fill="#d97c1e"/>
<circle cx="742" cy="390" r="1.6" fill="#d97c1e"/>
<circle cx="792" cy="558" r="1.6" fill="#d97c1e"/>
<circle cx="804" cy="566" r="1.6" fill="#d97c1e"/>
<circle cx="811" cy="564" r="1.6" fill="#d97c1e"/>
<circle cx="836" cy="518" r="1.6" fill="#d97c1e"/>
<circle cx="788" cy="518" r="1.6" fill="#d97c1e"/>
<circle cx="790" cy="526" r="1.6" fill="#d97c1e"/>
<circle cx="815" cy="586" r="1.6" fill="#d97c1e"/>
<circle cx="872" cy="580" r="1.6" fill="#d97c1e"/>
<circle cx="881" cy="538" r="1.6" fill="#d97c1e"/>
<circle cx="878" cy="527" r="1.6" fill="#d97c1e"/>
<circle cx="687.4" cy="393.2" r="1.8" fill="#cc0000"/><circle cx="535" cy="534" r="1.8" fill="#cc0000"/><circle cx="590" cy="540" r="1.8" fill="#cc0000"/><circle cx="487" cy="432" r="1.8" fill="#cc0000"/>
<text x="601" y="443" font-family="Liberation Sans" font-size="9.2" fill="#cf2a2a" text-anchor="middle" >Farmacia</text>
<text x="601" y="454" font-family="Liberation Sans" font-size="9.2" fill="#cf2a2a" text-anchor="middle" >Tres Ángeles</text>
<text x="735" y="495" font-family="Liberation Sans" font-size="9.2" fill="#cf2a2a" text-anchor="middle" >AudioCien</text>
<text x="764.5" y="542" font-family="Liberation Sans" font-size="9.2" fill="#cf2a2a" text-anchor="middle" >Audimed</text>
<text x="534.5" y="551.5" font-family="Liberation Sans" font-size="9.2" fill="#cf2a2a" text-anchor="middle" >Lebano</text>
<text x="590.5" y="557.7" font-family="Liberation Sans" font-size="9.2" fill="#cf2a2a" text-anchor="middle" >Odontovia</text>
<text x="474" y="558.5" font-family="Liberation Sans" font-size="9.2" fill="#2f8ae0">ombia</text>
<text x="505" y="569.7" font-family="Liberation Sans" font-size="9" fill="#8a8886" text-anchor="middle" >160</text>
<text x="533" y="582.5" font-family="Liberation Sans" font-size="9" fill="#8a8886" text-anchor="middle" >160</text>
<text x="847" y="507.0" font-family="Liberation Sans" font-size="9" fill="#7a5a9c" text-anchor="middle" font-style="italic">Industria</text>
<text x="847" y="517.8" font-family="Liberation Sans" font-size="9" fill="#7a5a9c" text-anchor="middle" font-style="italic">Torrico</text>
<text x="847" y="528.6" font-family="Liberation Sans" font-size="9" fill="#7a5a9c" text-anchor="middle" font-style="italic">Antelo</text>
<text x="0" y="0" font-family="Liberation Sans" font-size="10" fill="#3a3a3a" transform="translate(861 465) rotate(77)">Calle Luis Pasteur</text>
<text x="0" y="0" font-family="Liberation Sans" font-size="8" fill="#333" transform="translate(648 384) rotate(82)">lio</text>
<rect x="708.4" y="382" width="5.2" height="2" fill="#c70000"/>
<rect x="706.7" y="384" width="8.6" height="7.6" rx="1.6" fill="#c70000"/>
<path d="M710.3 385.4 h1.4 v2 h2 v1.4 h-2 v2 h-1.4 v-2 h-2 v-1.4 h2 z" fill="#fff"/>
<rect x="598.4" y="420" width="5.2" height="2" fill="#c70000"/>
<rect x="596.7" y="422" width="8.6" height="7.6" rx="1.6" fill="#c70000"/>
<path d="M600.3 423.4 h1.4 v2 h2 v1.4 h-2 v2 h-1.4 v-2 h-2 v-1.4 h2 z" fill="#fff"/>
<rect x="528.9" y="435" width="5.2" height="2" fill="#c70000"/>
<rect x="527.2" y="437" width="8.6" height="7.6" rx="1.6" fill="#c70000"/>
<path d="M530.8 438.4 h1.4 v2 h2 v1.4 h-2 v2 h-1.4 v-2 h-2 v-1.4 h2 z" fill="#fff"/>
<rect x="654.4" y="470.5" width="5.2" height="2" fill="#c70000"/>
<rect x="652.7" y="472.5" width="8.6" height="7.6" rx="1.6" fill="#c70000"/>
<path d="M656.3 473.9 h1.4 v2 h2 v1.4 h-2 v2 h-1.4 v-2 h-2 v-1.4 h2 z" fill="#fff"/>
<rect x="688.4" y="496" width="5.2" height="2" fill="#c70000"/>
<rect x="686.7" y="498" width="8.6" height="7.6" rx="1.6" fill="#c70000"/>
<path d="M690.3 499.4 h1.4 v2 h2 v1.4 h-2 v2 h-1.4 v-2 h-2 v-1.4 h2 z" fill="#fff"/>
<rect x="747.8" y="468" width="5.2" height="2" fill="#c70000"/>
<rect x="746.1" y="470" width="8.6" height="7.6" rx="1.6" fill="#c70000"/>
<path d="M749.6999999999999 471.4 h1.4 v2 h2 v1.4 h-2 v2 h-1.4 v-2 h-2 v-1.4 h2 z" fill="#fff"/>
<rect x="840.4" y="461.6" width="5.2" height="2" fill="#c70000"/>
<rect x="838.7" y="463.6" width="8.6" height="7.6" rx="1.6" fill="#c70000"/>
<path d="M842.3 465.0 h1.4 v2 h2 v1.4 h-2 v2 h-1.4 v-2 h-2 v-1.4 h2 z" fill="#fff"/>
<rect x="774.9" y="549.3" width="5.2" height="2" fill="#c70000"/>
<rect x="773.2" y="551.3" width="8.6" height="7.6" rx="1.6" fill="#c70000"/>
<path d="M776.8 552.6999999999999 h1.4 v2 h2 v1.4 h-2 v2 h-1.4 v-2 h-2 v-1.4 h2 z" fill="#fff"/>
<rect x="723.4" y="578.3" width="5.2" height="2" fill="#c70000"/>
<rect x="721.7" y="580.3" width="8.6" height="7.6" rx="1.6" fill="#c70000"/>
<path d="M725.3 581.6999999999999 h1.4 v2 h2 v1.4 h-2 v2 h-1.4 v-2 h-2 v-1.4 h2 z" fill="#fff"/>
<rect x="855.1999999999999" y="575.8" width="5.2" height="2" fill="#c70000"/>
<rect x="853.5" y="577.8" width="8.6" height="7.6" rx="1.6" fill="#c70000"/>
<path d="M857.0999999999999 579.1999999999999 h1.4 v2 h2 v1.4 h-2 v2 h-1.4 v-2 h-2 v-1.4 h2 z" fill="#fff"/>
<rect x="688.1999999999999" y="496.2" width="5.2" height="2" fill="#c70000"/>
<rect x="686.5" y="498.2" width="8.6" height="7.6" rx="1.6" fill="#c70000"/>
<path d="M690.0999999999999 499.59999999999997 h1.4 v2 h2 v1.4 h-2 v2 h-1.4 v-2 h-2 v-1.4 h2 z" fill="#fff"/>
<path d="M729.5 481.5 V478 Q729.5 472.5 735 472.5 Q740.5 472.5 740.5 478 V481.5 Z" fill="#c70000"/>
<path d="M734.3 475.8 h1.4 v2 h2 v1.4 h-2 v2 h-1.4 v-2 h-2 v-1.4 h2 z" fill="#fff"/>
<path d="M862.2 444.5 V441 Q862.2 435.5 867.7 435.5 Q873.2 435.5 873.2 441 V444.5 Z" fill="#c70000"/>
<path d="M867.0 438.8 h1.4 v2 h2 v1.4 h-2 v2 h-1.4 v-2 h-2 v-1.4 h2 z" fill="#fff"/>
<path d="M759.1 529.5 V526 Q759.1 520.5 764.6 520.5 Q770.1 520.5 770.1 526 V529.5 Z" fill="#c70000"/>
<path d="M763.9 523.8 h1.4 v2 h2 v1.4 h-2 v2 h-1.4 v-2 h-2 v-1.4 h2 z" fill="#fff"/>
<g fill="#c70000"><circle cx="515.4" cy="527" r="3.2"/><circle cx="511.4" cy="522" r="1.3"/><circle cx="514" cy="520.6" r="1.3"/><circle cx="517" cy="520.6" r="1.3"/><circle cx="519.5" cy="522" r="1.3"/></g>
<path d="M514.7 525.4 h1.4 v1.2 h1.2 v1.4 h-1.2 v1.2 h-1.4 v-1.2 h-1.2 v-1.4 h1.2z" fill="#fff"/>
<text x="511.5" y="471.5" font-family="Liberation Sans" font-weight="bold" font-size="13" fill="#3a8ee0" text-anchor="middle">P</text>
<text x="870" y="432" font-family="Liberation Sans" font-weight="bold" font-size="13" fill="#3a8ee0" text-anchor="middle">P</text>
<rect x="555.3" y="419.4" width="4" height="9.2" rx="2" fill="#fff" stroke="#4a4a4a" stroke-width="0.9"/>
<circle cx="557.3" cy="421.3" r="0.9" fill="none" stroke="#4a4a4a" stroke-width="0.6"/>
<circle cx="557.3" cy="424" r="0.9" fill="none" stroke="#4a4a4a" stroke-width="0.6"/>
<circle cx="557.3" cy="426.7" r="0.9" fill="none" stroke="#4a4a4a" stroke-width="0.6"/>
<rect x="751.3" y="386.9" width="4" height="9.2" rx="2" fill="#fff" stroke="#4a4a4a" stroke-width="0.9"/>
<circle cx="753.3" cy="388.8" r="0.9" fill="none" stroke="#4a4a4a" stroke-width="0.6"/>
<circle cx="753.3" cy="391.5" r="0.9" fill="none" stroke="#4a4a4a" stroke-width="0.6"/>
<circle cx="753.3" cy="394.2" r="0.9" fill="none" stroke="#4a4a4a" stroke-width="0.6"/>
<rect x="841.4" y="386.9" width="4" height="9.2" rx="2" fill="#fff" stroke="#4a4a4a" stroke-width="0.9"/>
<circle cx="843.4" cy="388.8" r="0.9" fill="none" stroke="#4a4a4a" stroke-width="0.6"/>
<circle cx="843.4" cy="391.5" r="0.9" fill="none" stroke="#4a4a4a" stroke-width="0.6"/>
<circle cx="843.4" cy="394.2" r="0.9" fill="none" stroke="#4a4a4a" stroke-width="0.6"/>
<rect x="769.9" y="470.9" width="4" height="9.2" rx="2" fill="#fff" stroke="#4a4a4a" stroke-width="0.9"/>
<circle cx="771.9" cy="472.8" r="0.9" fill="none" stroke="#4a4a4a" stroke-width="0.6"/>
<circle cx="771.9" cy="475.5" r="0.9" fill="none" stroke="#4a4a4a" stroke-width="0.6"/>
<circle cx="771.9" cy="478.2" r="0.9" fill="none" stroke="#4a4a4a" stroke-width="0.6"/>
<rect x="858.6" y="451.2" width="4" height="9.2" rx="2" fill="#fff" stroke="#4a4a4a" stroke-width="0.9"/>
<circle cx="860.6" cy="453.1" r="0.9" fill="none" stroke="#4a4a4a" stroke-width="0.6"/>
<circle cx="860.6" cy="455.8" r="0.9" fill="none" stroke="#4a4a4a" stroke-width="0.6"/>
<circle cx="860.6" cy="458.5" r="0.9" fill="none" stroke="#4a4a4a" stroke-width="0.6"/>
<rect x="668.7" y="493.4" width="4" height="9.2" rx="2" fill="#fff" stroke="#4a4a4a" stroke-width="0.9"/>
<circle cx="670.7" cy="495.3" r="0.9" fill="none" stroke="#4a4a4a" stroke-width="0.6"/>
<circle cx="670.7" cy="498" r="0.9" fill="none" stroke="#4a4a4a" stroke-width="0.6"/>
<circle cx="670.7" cy="500.7" r="0.9" fill="none" stroke="#4a4a4a" stroke-width="0.6"/>
<rect x="576.8" y="512.0" width="4" height="9.2" rx="2" fill="#fff" stroke="#4a4a4a" stroke-width="0.9"/>
<circle cx="578.8" cy="513.9" r="0.9" fill="none" stroke="#4a4a4a" stroke-width="0.6"/>
<circle cx="578.8" cy="516.6" r="0.9" fill="none" stroke="#4a4a4a" stroke-width="0.6"/>
<circle cx="578.8" cy="519.3000000000001" r="0.9" fill="none" stroke="#4a4a4a" stroke-width="0.6"/>
<rect x="482.7" y="533.4" width="4" height="9.2" rx="2" fill="#fff" stroke="#4a4a4a" stroke-width="0.9"/>
<circle cx="484.7" cy="535.3" r="0.9" fill="none" stroke="#4a4a4a" stroke-width="0.6"/>
<circle cx="484.7" cy="538" r="0.9" fill="none" stroke="#4a4a4a" stroke-width="0.6"/>
<circle cx="484.7" cy="540.7" r="0.9" fill="none" stroke="#4a4a4a" stroke-width="0.6"/>
<rect x="791.3" y="580.0" width="4" height="9.2" rx="2" fill="#fff" stroke="#4a4a4a" stroke-width="0.9"/>
<circle cx="793.3" cy="581.9" r="0.9" fill="none" stroke="#4a4a4a" stroke-width="0.6"/>
<circle cx="793.3" cy="584.6" r="0.9" fill="none" stroke="#4a4a4a" stroke-width="0.6"/>
<circle cx="793.3" cy="587.3000000000001" r="0.9" fill="none" stroke="#4a4a4a" stroke-width="0.6"/>
<rect x="880.8" y="562.1" width="4" height="9.2" rx="2" fill="#fff" stroke="#4a4a4a" stroke-width="0.9"/>
<circle cx="882.8" cy="564.0" r="0.9" fill="none" stroke="#4a4a4a" stroke-width="0.6"/>
<circle cx="882.8" cy="566.7" r="0.9" fill="none" stroke="#4a4a4a" stroke-width="0.6"/>
<circle cx="882.8" cy="569.4000000000001" r="0.9" fill="none" stroke="#4a4a4a" stroke-width="0.6"/>
<rect x="660.4" y="397.9" width="5.2" height="7" rx="1" fill="#2a9ee8"/>
<rect x="776.4" y="484.5" width="5.2" height="7" rx="1" fill="#2a9ee8"/>
<rect x="873.0" y="550.5" width="5.2" height="7" rx="1" fill="#2a9ee8"/>
<path d="M556 404 v6 M556 408 h10 v2 M557 405.5 h5" stroke="#2a9ee8" stroke-width="1.2" fill="none"/>
<path d="M720 396 v6 M720 400 h10 v2 M721 397.5 h5" stroke="#2a9ee8" stroke-width="1.2" fill="none"/>
<path d="M642.5 410.5 h1.5 l1 4.5 h5 l1 -3.5 h-6.6 M645.6 413.2 h4.6" fill="none" stroke="#b33ab3" stroke-width="1"/><circle cx="646" cy="416.6" r="0.8" fill="#b33ab3"/><circle cx="649.6" cy="416.6" r="0.8" fill="#b33ab3"/>
<path d="M599 407 L592 409" stroke="#555" stroke-width="0.9"/>
<path d="M653 391 L646 393" stroke="#555" stroke-width="0.9"/>
<path d="M538 527 L530 529" stroke="#555" stroke-width="0.9"/>
<path d="M566 525 L574 523" stroke="#555" stroke-width="0.9"/>
<path d="M725 492 L733 490" stroke="#555" stroke-width="0.9"/>
<path d="M786 483 L795 481" stroke="#555" stroke-width="0.9"/>
<path d="M846 464 L855 462" stroke="#555" stroke-width="0.9"/>
<path d="M803 577 L795 579" stroke="#555" stroke-width="0.9"/>
<path d="M548 509 L548 516" stroke="#555" stroke-width="0.9"/>
<path d="M586 449 L586 443" stroke="#555" stroke-width="0.9"/>
<path d="M656 496 L656 503" stroke="#555" stroke-width="0.9"/>
<path d="M745 526 L745 533" stroke="#555" stroke-width="0.9"/>
<path d="M684 558 l3 -3 l2 2 m-3 -1 l-2 5 l-3 1 m5 -4 l2 4" stroke="#1f9e3a" stroke-width="1.4" fill="none"/>
<ellipse cx="696" cy="482" rx="12" ry="6" fill="#000" fill-opacity="0.28" filter="url(#blr)" transform="rotate(-30 696 482)"/>
<path d="M682.3 493.6 C680 486 671.3 478 671.3 469.3 A11 11 0 0 1 693.5 469.3 C693.5 478 684.8 486 682.3 493.6 Z" fill="url(#pin)"/>
<circle cx="682.5" cy="469.4" r="4.3" fill="#fff"/>
</g>
<rect x="483.5" y="391.5" width="28" height="54.5" rx="3.5" fill="#fff" stroke="#bdbdbd" stroke-width="1.2"/>
<line x1="484" y1="418.6" x2="511" y2="418.6" stroke="#ccc" stroke-width="1"/>
<path d="M492 405 h11 M497.5 399.5 v11" stroke="#000" stroke-width="2.2"/>
<path d="M492 432.4 h11" stroke="#000" stroke-width="2.2"/>
</svg>
<div class="a" style="left:910px;top:45px;width:3px;height:467px;background:#6b7280;border-radius:2px"></div>
<!-- annotations -->
<div class="a" style="left:455px;top:45px;width:455px;height:551px;border:5px solid #ed1c24"></div>
<div class="a" style="left:1249px;top:245px;width:33px;height:41px;border:5px solid #ed1c24"></div>
<div class="t" style="left:885.2px;top:60.8px;font-size:21.5px;color:#ed1c24;font-weight:bold">2</div>
<div class="t" style="left:1289px;top:240.8px;font-size:20.5px;color:#ed1c24;font-weight:bold">1</div>
</body></html>
